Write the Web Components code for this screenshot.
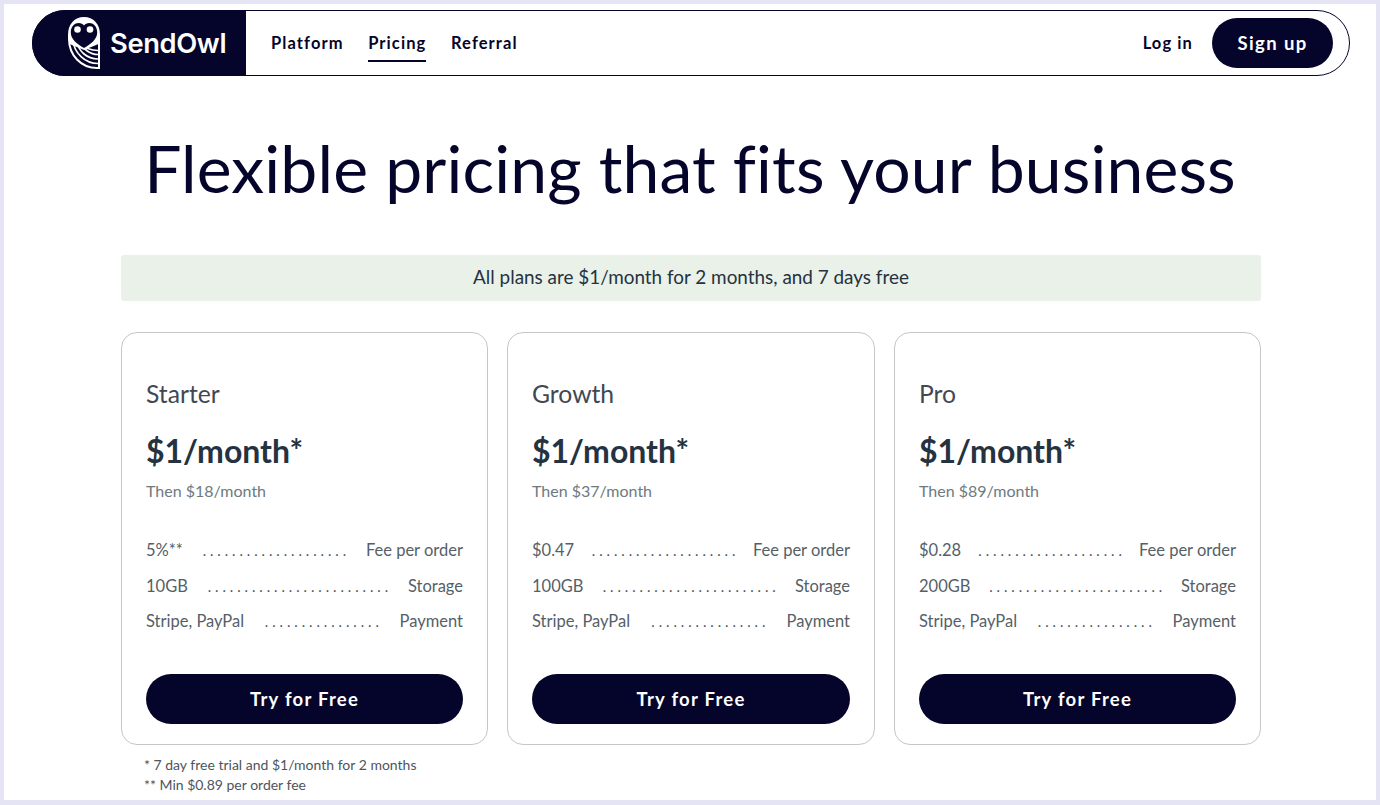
<!DOCTYPE html>
<html lang="en"><head><meta charset="utf-8"><title>SendOwl Pricing</title>
<style>
html,body{margin:0;padding:0;background:#fff}
body{font-family:"Lato","Noto Sans",sans-serif}
</style></head><body>
<so-page>
  <so-nav slot="nav"></so-nav>
  <h-title>Flexible pricing that fits your business</h-title>
  <so-banner>All plans are $1/month for 2 months, and 7 days free</so-banner>
  <so-plans>
    <plan-card name="Starter" then="Then $18/month">
      <plan-row value="5%**" dots="20" label="Fee per order"></plan-row>
      <plan-row value="10GB" dots="25" label="Storage"></plan-row>
      <plan-row value="Stripe, PayPal" dots="16" label="Payment"></plan-row>
    </plan-card>
    <plan-card name="Growth" then="Then $37/month">
      <plan-row value="$0.47" dots="20" label="Fee per order"></plan-row>
      <plan-row value="100GB" dots="24" label="Storage"></plan-row>
      <plan-row value="Stripe, PayPal" dots="16" label="Payment"></plan-row>
    </plan-card>
    <plan-card name="Pro" then="Then $89/month">
      <plan-row value="$0.28" dots="20" label="Fee per order"></plan-row>
      <plan-row value="200GB" dots="24" label="Storage"></plan-row>
      <plan-row value="Stripe, PayPal" dots="16" label="Payment"></plan-row>
    </plan-card>
  </so-plans>
  <so-notes></so-notes>
</so-page>
<script>
function def(name, html){
  customElements.define(name, class extends HTMLElement{
    connectedCallback(){
      if(this.shadowRoot) return;
      const r=this.attachShadow({mode:'open'});
      r.innerHTML=typeof html==='function'?html(this):html;
    }
  });
}
const F='"Lato","Noto Sans",sans-serif';
def('so-page',`<style>
:host{display:block;box-sizing:border-box;width:1380px;height:805px;border:4px solid #e4e4f4;border-bottom-width:5px;background:#fff;padding:6px 26px 0 28px;overflow:hidden;font-family:${F}}
</style><slot name="nav"></slot><slot></slot>`);
def('so-nav',`<style>
:host{display:flex;align-items:stretch;box-sizing:border-box;width:1318px;height:66px;border:1px solid #05042a;border-radius:33px;background:#fff}
.logo{display:flex;align-items:center;width:214px;margin:-1px 0 -1px -1px;background:#05042a;border-radius:33px 0 0 33px;color:#fff;box-sizing:border-box;padding-left:36px;gap:10px;font:600 27.3px "Inter",${F};letter-spacing:-.35px}
.links{display:flex;align-items:center;gap:24.5px;margin-left:25px;flex:1}
a{color:#05042a;font:700 16.5px ${F};letter-spacing:1.1px;text-decoration:none;height:38px;line-height:38px;box-sizing:border-box}
a.on{border-bottom:2px solid #05042a}
.right{display:flex;align-items:center;gap:19px;padding-right:16px}
.su{background:#05042a;color:#fff;width:121px;height:50px;border-radius:25px;display:flex;align-items:center;justify-content:center;font:700 18.5px ${F};letter-spacing:1.4px}
</style>
<div class="logo">
<svg width="32" height="52" viewBox="0 0 32 52" fill="none">
 <path d="M1 18C1 8 7 1 16 1S31 8 31 18V51H29C13 51 1 38 1 22Z" fill="#05042a" stroke="#fff" stroke-width="2"/>
 <g stroke="#fff" stroke-width="1.7">
  <path d="M5 23C6 36 17 46.500 30 46.500"/>
  <path d="M9 24C10 34 19 42 30 42"/>
  <path d="M13 26C15 32 22 37.500 30 37.500"/>
  <path d="M18 31C21 32 25 33.500 30 33.500"/>
 </g>
 <path d="M1.500 18C1.500 8 7 1.500 16 1.500S30.500 8 30.500 18V27L16 33 1.500 27Z" fill="#fff"/>
 <path d="M2.800 15C3 9 7 6 10.500 6 13 6 15 7 16 8.500 17 7 19 6 21.500 6 25 6 29 9 29.200 15 29.500 22 23 27 16 31 9 27 2.500 22 2.800 15Z" fill="#05042a"/>
 <circle cx="9.500" cy="12.500" r="3.300" fill="#fff"/><circle cx="22" cy="12.500" r="3.300" fill="#fff"/>
</svg><span>SendOwl</span></div>
<div class="links"><a>Platform</a><a class="on">Pricing</a><a>Referral</a></div>
<div class="right"><a>Log in</a><div class="su">Sign up</div></div>`);
def('h-title',`<style>
:host{display:block;text-align:center;color:#05042a;font:400 66px/1 ${F};margin:59px 0 0 -2px;letter-spacing:.15px;white-space:nowrap;height:120px}
</style><slot></slot>`);
def('so-banner',`<style>
:host{display:flex;align-items:center;justify-content:center;box-sizing:border-box;width:1140px;height:46px;padding-bottom:3px;margin:0 0 0 89px;background:#e9f1e9;border-radius:3px;color:#25323f;font:400 18.9px ${F}}
</style><slot></slot>`);
def('so-plans',`<style>
:host{display:grid;grid-template-columns:367px 368px 367px;gap:19px;width:1140px;margin:31px 0 0 89px}
</style><slot></slot>`);
def('plan-card',h=>`<style>
:host{display:flex;flex-direction:column;box-sizing:border-box;height:413px;border:1px solid #c6c6ca;border-radius:16px;padding:46px 24px 20px}
.n{font:400 24.7px/30px ${F};color:#414851}
.p{font:700 32px/44px ${F};color:#25323f;margin-top:20px}
.t{font:400 16px/22px ${F};color:#6d7a80;margin-top:7px}
.rows{display:flex;flex-direction:column;gap:13.5px;margin-top:37px;flex:1}
.b{display:flex;align-items:center;justify-content:center;height:50px;border-radius:25px;background:#05042a;color:#fff;font:700 18.5px ${F};letter-spacing:1.25px}
</style><div class="n">${h.getAttribute('name')}</div><div class="p">$1/month*</div><div class="t">${h.getAttribute('then')}</div>
<div class="rows"><slot></slot></div><div class="b">Try for Free</div>`);
def('plan-row',h=>`<style>
:host{display:flex;align-items:center;justify-content:space-between;color:#565f68;font:400 16.5px/22px ${F}}
.d{flex:1;text-align:center;overflow:hidden;white-space:nowrap;letter-spacing:3.95px;color:#4d555d;padding:0 8px 0 12px;transform:translateY(1px);font-size:14.5px}
</style><span>${h.getAttribute('value')}</span><span class="d">${'.'.repeat(+h.getAttribute('dots'))}</span><span>${h.getAttribute('label')}</span>`);
def('so-notes',`<style>
:host{display:block;margin:10px 0 0 112px;color:#4d555d;font:400 14px/20px ${F}}
</style><div>* 7 day free trial and $1/month for 2 months</div><div>** Min $0.89 per order fee</div>`);
</script>
</body></html>
